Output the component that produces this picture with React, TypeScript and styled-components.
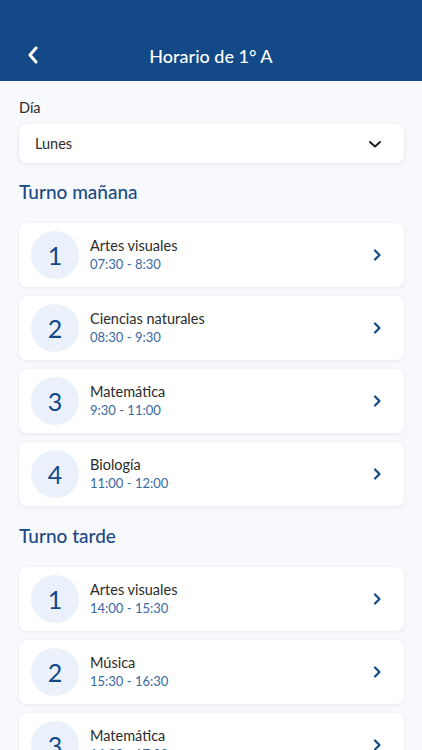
import React from "react";
import styled, { createGlobalStyle } from "styled-components";

const GlobalStyle = createGlobalStyle`
  body {
    margin: 0;
    background: #f7f9fc;
    font-family: Lato, "Noto Sans", sans-serif;
  }
`;

const Page = styled.div`
  width: 422px;
  height: 750px;
  overflow: hidden;
  background: #f7f9fc;
`;

const Header = styled.header`
  height: 81px;
  background: #134987;
  display: flex;
  align-items: flex-end;
  justify-content: center;
  position: relative;
  padding-bottom: 13px;
  box-sizing: border-box;
`;

const BackButton = styled.button`
  position: absolute;
  left: 22px;
  bottom: 15px;
  background: none;
  border: none;
  padding: 0;
  width: 22px;
  height: 22px;
  display: flex;
  align-items: center;
  justify-content: center;
`;

const HeaderTitle = styled.h1`
  margin: 0;
  color: #fff;
  font-size: 18px;
  font-weight: 500;
  line-height: 24px;
`;

const Content = styled.main`
  padding: 18px 18px 0 19px;
  display: flex;
  flex-direction: column;
`;

const Label = styled.label`
  font-size: 14.5px;
  color: #2b2b2b;
  line-height: 18px;
  margin-bottom: 7px;
`;

const Select = styled.div`
  height: 39px;
  flex-shrink: 0;
  background: #fff;
  border-radius: 8px;
  box-shadow: 0 1px 4px rgba(20, 40, 80, 0.1);
  display: flex;
  align-items: center;
  justify-content: space-between;
  padding: 0 22px 0 16px;
  font-size: 14.5px;
  color: #2b2b2b;
`;

const SectionTitle = styled.h2`
  margin: 17px 0 19px;
  font-size: 19px;
  font-weight: 500;
  color: #1a4a85;
  line-height: 24px;
`;

const List = styled.div`
  display: flex;
  flex-direction: column;
  gap: 9px;
  margin-bottom: 1px;
`;

const Card = styled.div`
  height: 64px;
  flex-shrink: 0;
  box-sizing: border-box;
  background: #fff;
  border-radius: 8px;
  box-shadow: 0 1px 4px rgba(20, 40, 80, 0.08);
  display: flex;
  align-items: center;
  padding: 0 22px 0 12px;
`;

const Badge = styled.div`
  width: 48px;
  height: 48px;
  border-radius: 50%;
  background: #eaf1fb;
  color: #134987;
  font-size: 25px;
  display: flex;
  align-items: center;
  justify-content: center;
  flex-shrink: 0;
`;

const Info = styled.div`
  flex: 1;
  margin-left: 11px;
  display: flex;
  flex-direction: column;
  gap: 1px;
`;

const Subject = styled.span`
  font-size: 14.5px;
  color: #2b2b2b;
  line-height: 18px;
`;

const Time = styled.span`
  font-size: 13px;
  color: #3a68a3;
  line-height: 17px;
`;

const ChevronLeft = () => (
  <svg width="14" height="18" viewBox="0 0 14 18">
    <path d="M10 2 L4 9 L10 16" stroke="#fff" strokeWidth="3" fill="none" strokeLinecap="round" strokeLinejoin="round" />
  </svg>
);

const ChevronDown = () => (
  <svg width="14" height="10" viewBox="0 0 14 10">
    <path d="M2 3 L7 7.5 L12 3" stroke="#1f1f1f" strokeWidth="2" fill="none" strokeLinecap="round" strokeLinejoin="round" />
  </svg>
);

const ChevronRight = () => (
  <svg width="10" height="14" viewBox="0 0 10 14">
    <path d="M3 2.5 L7.5 7 L3 11.5" stroke="#134987" strokeWidth="2.2" fill="none" strokeLinecap="round" strokeLinejoin="round" />
  </svg>
);

type Clase = { n: number; subject: string; time: string };

const manana: Clase[] = [
  { n: 1, subject: "Artes visuales", time: "07:30 - 8:30" },
  { n: 2, subject: "Ciencias naturales", time: "08:30 - 9:30" },
  { n: 3, subject: "Matemática", time: "9:30 - 11:00" },
  { n: 4, subject: "Biología", time: "11:00 - 12:00" },
];

const tarde: Clase[] = [
  { n: 1, subject: "Artes visuales", time: "14:00 - 15:30" },
  { n: 2, subject: "Música", time: "15:30 - 16:30" },
  { n: 3, subject: "Matemática", time: "16:30 - 17:30" },
];

function ClassList({ items }: { items: Clase[] }) {
  return (
    <List>
      {items.map(c => (
        <Card key={c.n}>
          <Badge>{c.n}</Badge>
          <Info>
            <Subject>{c.subject}</Subject>
            <Time>{c.time}</Time>
          </Info>
          <ChevronRight />
        </Card>
      ))}
    </List>
  );
}

export default function App() {
  return (
    <Page>
      <GlobalStyle />
      <Header>
        <BackButton>
          <ChevronLeft />
        </BackButton>
        <HeaderTitle>Horario de 1° A</HeaderTitle>
      </Header>

      <Content>
        <Label>Día</Label>
        <Select>
          <span>Lunes</span>
          <ChevronDown />
        </Select>

        <SectionTitle>Turno mañana</SectionTitle>
        <ClassList items={manana} />

        <SectionTitle>Turno tarde</SectionTitle>
        <ClassList items={tarde} />
      </Content>
    </Page>
  );
}
